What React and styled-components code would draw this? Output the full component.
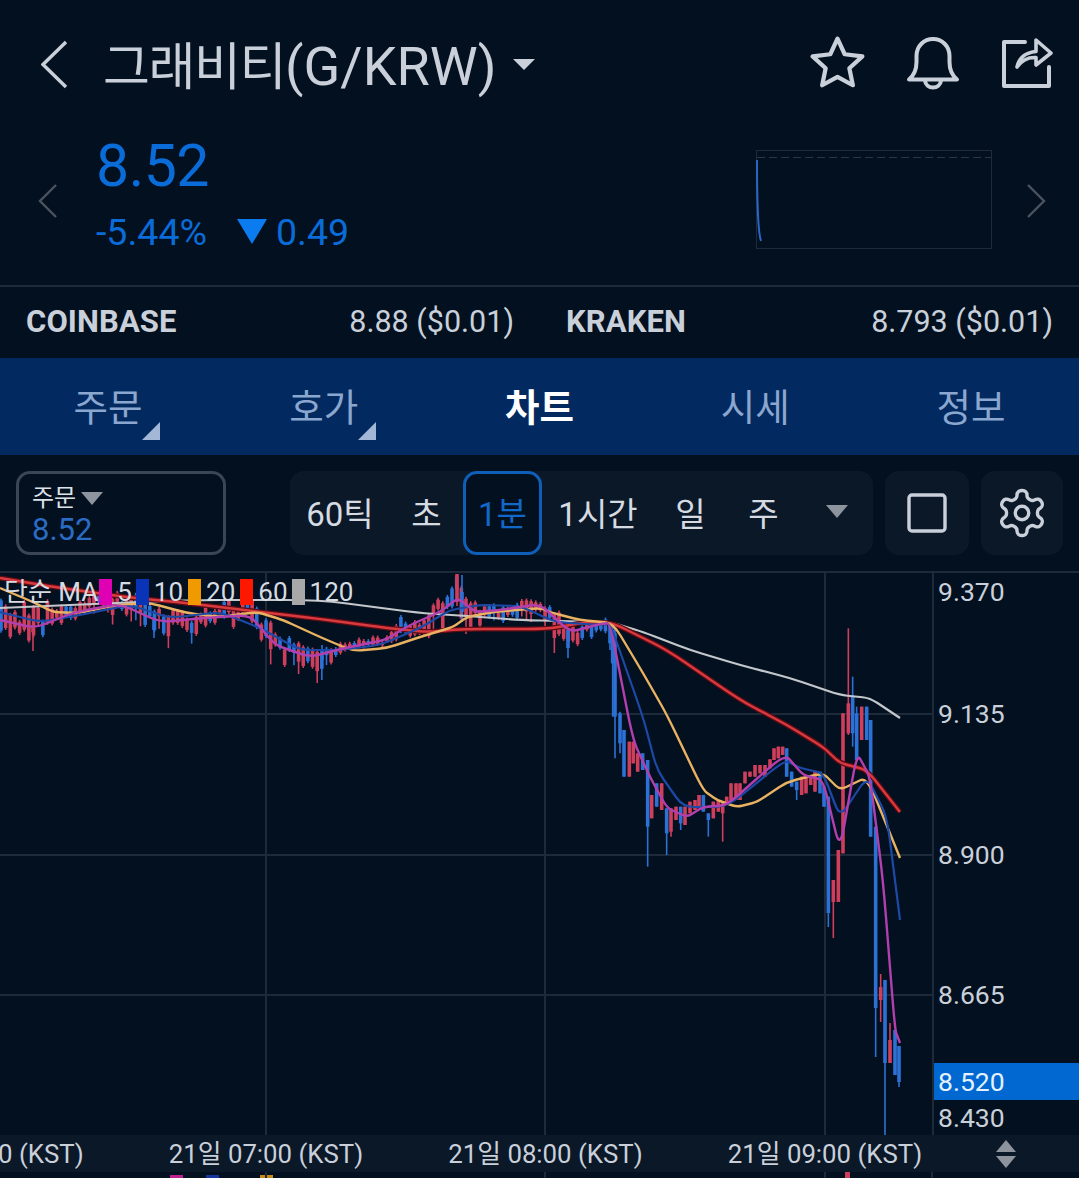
import React from 'react';
import styled, { createGlobalStyle } from 'styled-components';

const FONT = `Roboto, "Noto Sans CJK KR", "Noto Sans", sans-serif`;
const BG = '#03101f';
const PANEL = '#0b1828';
const TEXT = '#c9d0da';
const BLUE = '#0a6cd8';
const RED = '#cf3f5c';
const CANDLE_BLUE = '#2c72d6';
const GRID = '#1c2a3a';

const GlobalStyle = createGlobalStyle`
  html, body {
    margin: 0;
    height: 1178px;
    overflow: hidden;
    background: ${BG};
  }
  * { box-sizing: border-box; }
`;

const Page = styled.div`
  width: 1079px;
  height: 1178px;
  overflow: hidden;
  background: ${BG};
  font-family: ${FONT};
  color: ${TEXT};
`;

const Header = styled.header`
  display: flex;
  align-items: center;
  height: 128px;
  padding: 0 26px 0 41px;
`;

const Title = styled.h1`
  margin: -3px 0 0 35px;
  font-size: 51px;
  font-weight: 400;
  letter-spacing: -1.4px;
  white-space: nowrap;
`;

const TitleLatin = styled.span`
  font-size: 54px;
  letter-spacing: 0;
`;

const TitleCaret = styled.span`
  margin: 0 auto 0 16px;
  width: 0;
  height: 0;
  border-left: 11px solid transparent;
  border-right: 11px solid transparent;
  border-top: 11px solid ${TEXT};
`;

const HeaderIcons = styled.div`
  display: flex;
  align-items: center;
  gap: 41px;
  margin-top: -3px;
`;

const PriceRow = styled.section`
  display: flex;
  align-items: center;
  height: 159px;
  padding: 0 33px 0 38px;
  border-bottom: 2px solid ${GRID};
`;

const NavArrow = styled.div`
  display: flex;
  margin-top: -12px;
`;

const PriceBlock = styled.div`
  display: flex;
  flex-direction: column;
  margin: -27px auto 0 38px;
`;

const BigPrice = styled.div`
  color: ${BLUE};
  font-size: 59px;
  line-height: 70px;
  margin-bottom: 7px;
  letter-spacing: -0.5px;
`;

const ChangeRow = styled.div`
  display: flex;
  align-items: center;
  color: ${BLUE};
  font-size: 37.5px;
  line-height: 48px;
`;

const DownMark = styled.span`
  width: 0;
  height: 0;
  margin: 0 9px 0 30px;
  border-left: 15px solid transparent;
  border-right: 15px solid transparent;
  border-top: 25px solid #0a7cf0;
`;

const Spark = styled.svg`
  display: block;
  margin: -15px 34px 0 0;
`;

const ExchangeRow = styled.section`
  display: grid;
  grid-template-columns: 514px 513px;
  height: 71px;
  padding: 0 0 2px 26px;
  align-items: center;
  font-size: 31px;
`;

const ExchangeCell = styled.div`
  display: flex;
  justify-content: space-between;
  align-items: baseline;
  &:first-child { padding-right: 26px; }
  &:last-child { padding-left: 26px; }
`;

const ExchangeName = styled.b`
  font-weight: 700;
  letter-spacing: 0.1px;
`;

const ExchangeValue = styled.span`
  font-size: 30.5px;
  font-weight: 400;
`;

const Tabs = styled.nav`
  display: flex;
  height: 97px;
  background: #022a60;
`;

const Tab = styled.div`
  position: relative;
  flex: 1;
  display: flex;
  align-items: center;
  justify-content: center;
  padding-bottom: 5px;
  font-size: 37.5px;
  font-weight: ${(p) => (p.$active ? 700 : 400)};
  color: ${(p) => (p.$active ? '#ffffff' : '#8ba6cf')};
`;

const TabCorner = styled.span`
  position: absolute;
  left: 142px;
  top: 64px;
  width: 0;
  height: 0;
  border-bottom: 18px solid #a3b7d6;
  border-left: 18px solid transparent;
`;

const Toolbar = styled.section`
  display: flex;
  align-items: center;
  height: 118px;
  padding: 0 0 0 16px;
  border-bottom: 2px solid ${GRID};
`;

const OrderBox = styled.div`
  flex: none;
  width: 210px;
  height: 84px;
  padding: 10px 13px 0;
  border: 3px solid #3a4656;
  border-radius: 14px;
  margin-right: 64px;
`;

const OrderLabel = styled.div`
  display: flex;
  align-items: center;
  gap: 5px;
  font-size: 24px;
  line-height: 28px;
  color: #dde2e8;
`;

const SmallCaret = styled.span`
  width: 0;
  height: 0;
  border-left: 11px solid transparent;
  border-right: 11px solid transparent;
  border-top: 13px solid #8d949d;
`;

const OrderPrice = styled.div`
  color: #2a6cc4;
  font-size: 31px;
  line-height: 36px;
`;

const IntervalGroup = styled.div`
  display: flex;
  flex: none;
  height: 84px;
  width: 583px;
  border-radius: 14px;
  background: ${PANEL};
`;

const Interval = styled.div`
  display: flex;
  align-items: center;
  justify-content: center;
  width: ${(p) => p.$w}px;
  padding-bottom: 3px;
  font-size: 33px;
  color: ${(p) => (p.$active ? '#1268c8' : '#d6dbe2')};
  background: ${(p) => (p.$active ? BG : 'transparent')};
  border: ${(p) => (p.$active ? '3px solid #0f5fb8' : 'none')};
  border-radius: 14px;
`;

const ToolButton = styled.div`
  display: flex;
  flex: none;
  align-items: center;
  justify-content: center;
  width: ${(p) => p.$w}px;
  height: 84px;
  margin-left: 12px;
  border-radius: 14px;
  background: ${PANEL};
`;

const ChartArea = styled.section`
  position: relative;
  display: flex;
  height: 562px;
`;

const Plot = styled.svg`
  display: block;
  flex: none;
`;

const PriceAxis = styled.div`
  position: relative;
  flex: 1;
  border-left: 2px solid ${GRID};
`;

const AxisLabel = styled.span`
  position: absolute;
  left: 4px;
  top: ${(p) => p.$y - 573 - 17}px;
  font-size: 26.5px;
  line-height: 34px;
  color: ${TEXT};
`;

const CurrentPrice = styled.div`
  position: absolute;
  left: 0;
  right: 0;
  top: 490px;
  height: 37px;
  padding-left: 4px;
  font-size: 26.5px;
  line-height: 37px;
  color: #e4f2ff;
  background: #0068d0;
`;

const Legend = styled.div`
  position: absolute;
  left: 4px;
  top: 6px;
  display: flex;
  align-items: center;
  font-size: 26px;
  line-height: 26px;
  color: #d6dbe2;
`;

const LegendChip = styled.i`
  width: 13px;
  height: 26px;
  margin: 0 5px 0 ${(p) => p.$gap}px;
  background: ${(p) => p.$color};
`;

const TimeAxis = styled.div`
  display: flex;
  align-items: center;
  height: 37px;
  padding-bottom: 4px;
  background: ${PANEL};
  overflow: hidden;
  font-size: 25.8px;
  font-weight: 400;
`;

const TimeTick = styled.div`
  flex: none;
  width: 279.5px;
  text-align: center;
  white-space: nowrap;
  &:first-child { margin-left: -153.25px; }
`;

const Spinner = styled.div`
  display: flex;
  flex-direction: column;
  gap: 4px;
  margin: 4px 0 0 31px;
`;

const SpinUp = styled.span`
  width: 0;
  height: 0;
  border-left: 10px solid transparent;
  border-right: 10px solid transparent;
  border-bottom: 12px solid #8d949d;
`;

const SpinDown = styled(SpinUp)`
  border-bottom: none;
  border-top: 12px solid #8d949d;
`;

const BottomStrip = styled.svg`
  display: block;
`;

/* ---------- icons ---------- */

const Chevron = ({ w, h, dir = 'left', color, sw }) => (
  <svg width={w} height={h} viewBox={`0 0 ${w} ${h}`} fill="none">
    <path
      d={dir === 'left' ? `M${w - 2} 2L2 ${h / 2}L${w - 2} ${h - 2}` : `M2 2L${w - 2} ${h / 2}L2 ${h - 2}`}
      stroke={color}
      strokeWidth={sw}
    />
  </svg>
);

const StarIcon = () => (
  <svg width="55" height="53" viewBox="1 1 52 50" fill="none">
    <path
      d="M27 3.5L33.8 18.2L50.5 20.2L38.2 31.4L41.5 47.5L27 39.5L12.5 47.5L15.8 31.4L3.5 20.2L20.2 18.2Z"
      stroke={TEXT}
      strokeWidth="4"
      strokeLinejoin="round"
    />
  </svg>
);

const BellIcon = () => (
  <svg width="54" height="54" viewBox="0 0 54 54" fill="none" stroke={TEXT} strokeWidth="4" strokeLinejoin="round">
    <path d="M3 43.5C9 38.5 10.5 33 10.5 26V20C10.5 10 18 3 27 3C36 3 43.5 10 43.5 20V26C43.5 33 45 38.5 51 43.5Z" />
    <path d="M19 44.5C19.5 49 23 51.5 27 51.5C31 51.5 34.5 49 35 44.5" />
  </svg>
);

const ShareIcon = () => (
  <svg width="52" height="52" viewBox="0 0 52 52" fill="none">
    <path
      d="M24 5H3V49H48V30"
      stroke={TEXT}
      strokeWidth="4"
      strokeLinejoin="round"
      strokeLinecap="round"
    />
    <path
      d="M16 30C18 21 24 15.5 35 14.5V3L50 16L35 28V20.5C28 20 21 23 16 30Z"
      stroke={TEXT}
      strokeWidth="3.6"
      strokeLinejoin="round"
    />
  </svg>
);

const SquareIcon = () => (
  <svg width="40" height="40" viewBox="0 0 40 40" fill="none">
    <rect x="2" y="2" width="36" height="36" rx="3" stroke={TEXT} strokeWidth="3.4" />
  </svg>
);

const GearIcon = () => (
  <svg width="54" height="54" viewBox="0 0 24 24" fill="none" stroke={TEXT} strokeWidth="1.5" strokeLinejoin="round" strokeLinecap="round">
    <path d="M12.22 2h-.44a2 2 0 0 0-2 2v.18a2 2 0 0 1-1 1.73l-.43.25a2 2 0 0 1-2 0l-.15-.08a2 2 0 0 0-2.73.73l-.22.38a2 2 0 0 0 .73 2.73l.15.1a2 2 0 0 1 1 1.72v.51a2 2 0 0 1-1 1.74l-.15.09a2 2 0 0 0-.73 2.73l.22.38a2 2 0 0 0 2.73.73l.15-.08a2 2 0 0 1 2 0l.43.25a2 2 0 0 1 1 1.73V20a2 2 0 0 0 2 2h.44a2 2 0 0 0 2-2v-.18a2 2 0 0 1 1-1.73l.43-.25a2 2 0 0 1 2 0l.15.08a2 2 0 0 0 2.73-.73l.22-.39a2 2 0 0 0-.73-2.73l-.15-.08a2 2 0 0 1-1-1.74v-.5a2 2 0 0 1 1-1.74l.15-.09a2 2 0 0 0 .73-2.73l-.22-.38a2 2 0 0 0-2.73-.73l-.15.08a2 2 0 0 1-2 0l-.43-.25a2 2 0 0 1-1-1.73V4a2 2 0 0 0-2-2z" />
    <circle cx="12" cy="12" r="3" />
  </svg>
);

/* ---------- chart data (page coordinates, the viewBox starts at y=573) ---------- */

// x, y, how much the candles swing there
const PATH = [
  [0, 620, 20], [30, 625, 20], [60, 615, 11], [100, 600, 9], [130, 606, 13], [155, 618, 14],
  [190, 622, 12], [220, 612, 11], [250, 612, 14], [270, 642, 17], [290, 652, 14], [320, 657, 13],
  [345, 645, 5], [385, 642, 5], [400, 628, 12], [430, 620, 14], [450, 600, 20], [458, 592, 24],
  [470, 612, 17], [480, 618, 14], [500, 612, 9], [540, 603, 9], [555, 625, 17], [570, 637, 11],
  [590, 628, 9], [610, 626, 10],
];

function pathAt(x) {
  for (let i = 1; i < PATH.length; i++) {
    const [x0, y0, v0] = PATH[i - 1];
    const [x1, y1, v1] = PATH[i];
    if (x <= x1) {
      const t = (x - x0) / (x1 - x0);
      return [y0 + (y1 - y0) * t, v0 + (v1 - v0) * t];
    }
  }
  return [626, 8];
}

function makeLeftCandles() {
  let seed = 7;
  const rand = () => {
    seed = (seed * 16807) % 2147483647;
    return seed / 2147483647;
  };
  const list = [];
  for (let x = 1; x < 610; x += 4.65) {
    const [y, vol] = pathAt(x);
    const up = rand() > 0.45;
    const h = vol * (0.5 + rand() * 1.1);
    const mid = y + (rand() - 0.5) * vol * 1.1;
    const top = mid - h / 2;
    const bot = mid + h / 2;
    const wick = rand() > 0.8 ? vol * 0.9 : 2;
    list.push({ x, top, bot, wt: top - 2, wb: bot + wick, c: up ? 'r' : 'b' });
  }
  // the long tails that stand out
  list.push({ x: 33, top: 625, bot: 632, wt: 620, wb: 651, c: 'r' });
  list.push({ x: 154, top: 620, bot: 630, wt: 612, wb: 638, c: 'b' });
  list.push({ x: 322, top: 650, bot: 660, wt: 645, wb: 668, c: 'b' });
  list.push({ x: 457, top: 574, bot: 602, wt: 574, wb: 606, c: 'r' });
  list.push({ x: 462, top: 592, bot: 612, wt: 575, wb: 622, c: 'b' });
  list.push({ x: 568, top: 630, bot: 648, wt: 625, wb: 658, c: 'b' });
  return list;
}

// measured off the crop: v is 3 x (page - 600)
const RIGHT_RAW = [
  [30, 70, 130, 65, 150, 'b'], [38, 90, 190, 80, 350, 'b'], [45, 100, 350, 70, 475, 'b'], [60, 340, 430, 335, 460, 'b'],
  [72, 390, 530, 390, 530, 'b'], [88, 425, 530, 425, 530, 'r'], [100, 425, 490, 425, 490, 'r'],
  [113, 460, 515, 460, 515, 'r'], [128, 460, 510, 460, 510, 'b'], [143, 480, 680, 480, 800, 'b'],
  [155, 585, 655, 585, 655, 'r'], [170, 550, 620, 550, 620, 'b'], [185, 550, 630, 550, 630, 'r'],
  [200, 625, 700, 625, 765, 'b'], [213, 625, 695, 625, 710, 'r'], [228, 620, 660, 620, 660, 'r'],
  [242, 620, 670, 620, 690, 'b'], [255, 620, 675, 620, 675, 'r'], [270, 605, 640, 605, 640, 'r'],
  [285, 600, 630, 600, 630, 'r'], [297, 585, 625, 585, 625, 'r'], [310, 585, 635, 585, 635, 'b'],
  [325, 640, 660, 640, 710, 'b'], [340, 605, 655, 605, 655, 'r'], [355, 600, 635, 600, 635, 'r'],
  [368, 610, 640, 610, 725, 'r'], [380, 590, 615, 590, 615, 'r'], [393, 550, 600, 550, 600, 'r'],
  [408, 550, 600, 550, 600, 'r'], [420, 550, 600, 550, 600, 'r'], [435, 515, 550, 515, 550, 'r'],
  [450, 515, 530, 515, 530, 'r'], [465, 495, 530, 495, 530, 'r'], [480, 495, 520, 495, 520, 'r'],
  [495, 495, 530, 495, 530, 'r'], [510, 478, 505, 478, 505, 'r'], [522, 445, 480, 445, 480, 'r'],
  [535, 440, 475, 440, 475, 'r'], [548, 440, 465, 440, 465, 'r'], [560, 445, 530, 445, 530, 'b'],
  [575, 515, 560, 515, 560, 'b'], [590, 545, 570, 545, 600, 'b'], [605, 530, 585, 530, 585, 'r'],
  [618, 530, 580, 530, 580, 'r'], [632, 530, 555, 530, 555, 'r'], [645, 515, 575, 515, 575, 'r'],
  [660, 515, 580, 515, 580, 'b'], [672, 560, 620, 560, 620, 'b'], [685, 590, 939, 590, 981, 'b'],
  [700, 840, 906, 840, 1014, 'r'], [715, 750, 906, 750, 906, 'r'], [729, 340, 760, 340, 760, 'r'],
  [745, 310, 400, 85, 405, 'r'], [758, 290, 400, 230, 440, 'b'], [770, 340, 480, 320, 480, 'b'],
  [785, 320, 420, 320, 420, 'r'], [800, 320, 420, 320, 420, 'b'], [812, 360, 710, 360, 710, 'b'],
  [827, 680, 1224, 680, 1371, 'b'], [842, 1161, 1200, 1122, 1266, 'r'], [855, 1140, 1389, 1140, 1611, 'b'],
  [870, 1320, 1389, 1269, 1389, 'r'], [885, 1290, 1425, 1290, 1425, 'b'], [897, 1338, 1446, 1338, 1461, 'b'],
];

const page = (v) => 600 + v / 3;

const CANDLES = [
  ...makeLeftCandles(),
  ...RIGHT_RAW.map(([x, top, bot, wt, wb, c]) => ({
    x: page(x), top: page(top), bot: page(bot), wt: page(wt), wb: page(wb), c,
  })),
];

const MA120 = '0,608 187,600 320,600 420,613 467,616 520,620 600,622 610,622 643,632 690,650 740,665 790,678 840,695 870,698 900,718';
const MA60 = '0,578 54,587 125,597 186,603 261,612 320,619 387,628 427,632 463,629 547,629 587,622 613,623 667,650 740,700 787,725 823,747 840,763 867,770 900,812';
const MA20 = '0,588 33,602 53,612 77,613 117,605 150,603 187,613 220,617 257,612 283,620 320,637 353,651 387,648 420,637 453,627 467,617 493,612 540,608 553,613 580,620 613,623 643,673 667,715 703,790 717,800 737,807 757,802 787,782 823,773 840,790 867,777 900,858';
const MA10 = '0,612 40,622 80,615 130,605 170,618 220,612 260,628 300,650 340,650 380,645 420,628 450,610 480,605 520,606 555,622 600,625 610,623 643,717 657,770 683,807 727,807 785,760 800,768 823,773 840,817 867,777 887,817 900,920';
const MA5 = '0,620 35,628 75,612 120,604 160,622 205,618 250,615 275,645 310,657 345,648 385,640 410,625 440,612 458,598 475,612 500,610 540,604 570,632 600,624 610,623 633,740 650,777 667,808 687,817 703,807 727,805 785,754 803,775 823,780 840,850 857,753 870,777 883,880 895,1030 900,1043';

// rounds only the corners of a polyline, so its peaks stay where they were measured
function smooth(pts) {
  const p = pts.split(' ').map((s) => s.split(',').map(Number));
  const lerp = (a, b, t) => [a[0] + (b[0] - a[0]) * t, a[1] + (b[1] - a[1]) * t];
  let d = `M${p[0][0]} ${p[0][1]}`;
  for (let i = 1; i < p.length - 1; i++) {
    const from = lerp(p[i], p[i - 1], 0.25);
    const to = lerp(p[i], p[i + 1], 0.25);
    d += `L${from[0]} ${from[1]}Q${p[i][0]} ${p[i][1]} ${to[0]} ${to[1]}`;
  }
  const last = p[p.length - 1];
  return `${d}L${last[0]} ${last[1]}`;
}

const LINES = [
  { pts: MA120, color: '#c3c7cb', w: 2.2 },
  { pts: MA60, color: '#5c0c14', w: 5 },
  { pts: MA60, color: '#d93a3f', w: 2.4 },
  { pts: MA20, color: '#e8b262', w: 2.4 },
  { pts: MA10, color: '#1d49a6', w: 2.2 },
  { pts: MA5, color: '#b23fae', w: 2.4 },
];

const INTERVALS = [
  { label: '60틱', w: 100 },
  { label: '초', w: 73 },
  { label: '1분', w: 79, active: true },
  { label: '1시간', w: 112 },
  { label: '일', w: 73 },
  { label: '주', w: 73 },
];

const MA_LEGEND = [
  { color: '#e000b4', label: '5', gap: 1 },
  { color: '#0a34b8', label: '10', gap: 4 },
  { color: '#f09a00', label: '20', gap: 5 },
  { color: '#ff1800', label: '60', gap: 5 },
  { color: '#a8a8a8', label: '120', gap: 4 },
];

function Candle({ x, top, bot, wt, wb, c }) {
  const color = c === 'r' ? RED : CANDLE_BLUE;
  return (
    <g>
      <line x1={x} x2={x} y1={wt} y2={wb} stroke={color} strokeWidth="1.6" />
      <rect x={x - 1.8} y={top} width="3.6" height={Math.max(bot - top, 1.5)} fill={color} />
    </g>
  );
}

function App() {
  return (
    <Page>
      <GlobalStyle />
      <Header>
        <Chevron w={27} h={49} color={TEXT} sw={3.4} />
        <Title>그래비티<TitleLatin>(G/KRW)</TitleLatin></Title>
        <TitleCaret />
        <HeaderIcons>
          <StarIcon />
          <BellIcon />
          <ShareIcon />
        </HeaderIcons>
      </Header>

      <PriceRow>
        <NavArrow><Chevron w={20} h={36} color="#4a535e" sw={2.4} /></NavArrow>
        <PriceBlock>
          <BigPrice>8.52</BigPrice>
          <ChangeRow>
            -5.44%
            <DownMark />
            0.49
          </ChangeRow>
        </PriceBlock>
        <Spark width="236" height="99" viewBox="0 0 236 99" fill="none">
          <rect x="0.5" y="0.5" width="235" height="98" stroke="#1f2b3a" />
          <line x1="1" x2="235" y1="7.5" y2="7.5" stroke="#2a3644" strokeDasharray="8 4" />
          <path d="M1 10C1 40 1 80 5 91" stroke="#2b67c8" strokeWidth="2" />
        </Spark>
        <NavArrow><Chevron w={20} h={36} dir="right" color="#4a535e" sw={2.4} /></NavArrow>
      </PriceRow>

      <ExchangeRow>
        <ExchangeCell>
          <ExchangeName>COINBASE</ExchangeName>
          <ExchangeValue>8.88 ($0.01)</ExchangeValue>
        </ExchangeCell>
        <ExchangeCell>
          <ExchangeName>KRAKEN</ExchangeName>
          <ExchangeValue>8.793 ($0.01)</ExchangeValue>
        </ExchangeCell>
      </ExchangeRow>

      <Tabs>
        <Tab>주문<TabCorner /></Tab>
        <Tab>호가<TabCorner /></Tab>
        <Tab $active>차트</Tab>
        <Tab>시세</Tab>
        <Tab>정보</Tab>
      </Tabs>

      <Toolbar>
        <OrderBox>
          <OrderLabel>주문<SmallCaret /></OrderLabel>
          <OrderPrice>8.52</OrderPrice>
        </OrderBox>
        <IntervalGroup>
          {INTERVALS.map((item) => (
            <Interval key={item.label} $w={item.w} $active={item.active}>{item.label}</Interval>
          ))}
          <Interval $w={73}><SmallCaret /></Interval>
        </IntervalGroup>
        <ToolButton $w={84}><SquareIcon /></ToolButton>
        <ToolButton $w={82}><GearIcon /></ToolButton>
      </Toolbar>

      <ChartArea>
        <Plot width="932" height="562" viewBox="0 573 932 562">
          {[266, 545, 825].map((x) => (
            <line key={x} x1={x} x2={x} y1="573" y2="1135" stroke={GRID} strokeWidth="2" />
          ))}
          {[714, 855, 995].map((y) => (
            <line key={y} x1="0" x2="932" y1={y} y2={y} stroke={GRID} strokeWidth="2" />
          ))}
          {CANDLES.map((c, i) => (
            <Candle key={i} {...c} />
          ))}
          {LINES.map((l, i) => (
            <path key={i} d={smooth(l.pts)} fill="none" stroke={l.color} strokeWidth={l.w} strokeLinejoin="round" />
          ))}
        </Plot>
        <PriceAxis>
          <AxisLabel $y={592}>9.370</AxisLabel>
          <AxisLabel $y={714}>9.135</AxisLabel>
          <AxisLabel $y={855}>8.900</AxisLabel>
          <AxisLabel $y={995}>8.665</AxisLabel>
          <CurrentPrice>8.520</CurrentPrice>
          <AxisLabel $y={1118}>8.430</AxisLabel>
        </PriceAxis>
        <Legend>
          단순 MA
          {MA_LEGEND.map((m) => (
            <React.Fragment key={m.label}>
              <LegendChip $color={m.color} $gap={m.gap} />
              {m.label}
            </React.Fragment>
          ))}
        </Legend>
      </ChartArea>

      <TimeAxis>
        <TimeTick>21일 06:00 (KST)</TimeTick>
        <TimeTick>21일 07:00 (KST)</TimeTick>
        <TimeTick>21일 08:00 (KST)</TimeTick>
        <TimeTick>21일 09:00 (KST)</TimeTick>
        <Spinner>
          <SpinUp />
          <SpinDown />
        </Spinner>
      </TimeAxis>

      <BottomStrip width="1079" height="6" viewBox="0 0 1079 6">
        <rect x="170" y="3" width="13" height="3" fill="#c0208f" />
        <rect x="206" y="3" width="13" height="3" fill="#15379c" />
        <rect x="260" y="3" width="13" height="3" fill="#c98a18" />
        <rect x="845" y="0" width="5" height="6" fill={RED} />
        {[266, 545, 825, 932].map((x) => (
          <line key={x} x1={x} x2={x} y1="0" y2="6" stroke={GRID} strokeWidth="2" />
        ))}
      </BottomStrip>
    </Page>
  );
}

export default App;
